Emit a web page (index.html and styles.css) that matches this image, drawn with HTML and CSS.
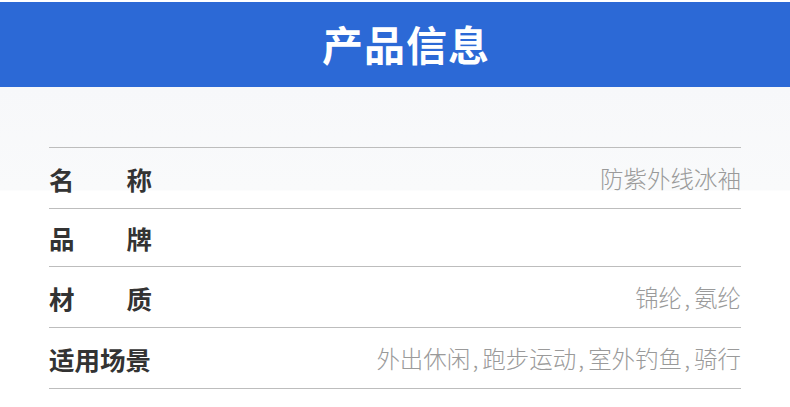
FILE: index.html
```html
<!DOCTYPE html>
<html lang="zh">
<head>
<meta charset="utf-8">
<link rel="stylesheet" href="styles.css">
</head>
<body>
<div class="page">
  <header class="banner"><h1 class="title">产品信息</h1></header>
  <section class="info">
    <div class="table">
      <div class="row"><span class="label">名<i></i>称</span><span class="value">防紫外线冰袖</span></div>
      <div class="row"><span class="label">品<i></i>牌</span><span class="value"></span></div>
      <div class="row"><span class="label">材<i></i>质</span><span class="value">锦纶<span class="sep">,</span>氨纶</span></div>
      <div class="row last"><span class="label">适用场景</span><span class="value">外出休闲<span class="sep">,</span>跑步运动<span class="sep">,</span>室外钓鱼<span class="sep">,</span>骑行</span></div>
    </div>
  </section>
</div>
</body>
</html>
```
FILE: styles.css
```css
* { box-sizing: border-box; margin: 0; padding: 0; }
html, body { background: #fff; }
body {
  margin: 0;
  font-family: "Noto Sans CJK SC", "Noto Sans", sans-serif;
}
.page { width: 790px; height: 407px; overflow: hidden; padding-top: 2px; }
.banner {
  height: 85px;
  background: #2c69d6;
  display: flex;
  align-items: center;
  justify-content: center;
  padding-left: 22px;
}
.title {
  color: #fff;
  font-size: 41px;
  font-weight: 700;
  letter-spacing: 1px;
  line-height: 1;
  margin-top: -2px;
}
.info {
  background: linear-gradient(to bottom, #f7f8fa 0, #f9fafb 103px, #ffffff 104px);
  padding: 60px 49px 0 49px;
}
.table { width: 692px; }
.row {
  display: flex;
  align-items: center;
  justify-content: space-between;
  border-top: 1px solid #bdbdbd;
  padding: 10px 0;
}
.row.last { border-bottom: 1px solid #bdbdbd; }
.label {
  display: flex;
  justify-content: space-between;
  width: 103px;
  font-size: 25.5px;
  font-weight: 700;
  color: #333;
  line-height: 37px;
}
.label i { flex: 1; }
.value {
  font-size: 23.5px;
  font-weight: 300;
  color: #9a9a9a;
  line-height: 40px;
  text-align: right;
}
.sep { margin: 0 4px 0 2px; }
```
